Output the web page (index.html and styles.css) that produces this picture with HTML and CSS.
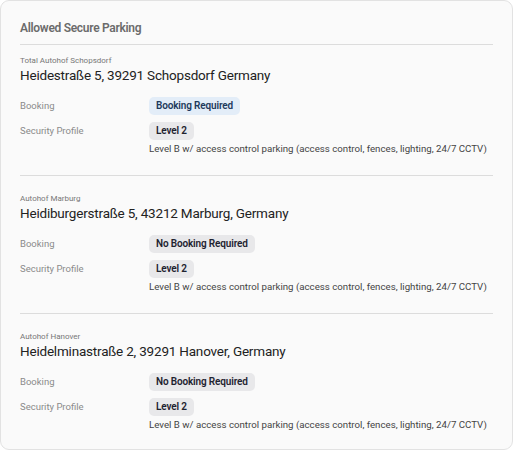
FILE: index.html
```html
<!DOCTYPE html>
<html>
<head>
<meta charset="utf-8">
<link rel="stylesheet" href="styles.css">
</head>
<body>
<div class="card">
  <h2 class="title">Allowed Secure Parking</h2>
  <section class="site">
    <div class="site-name">Total Autohof Schopsdorf</div>
    <div class="address">Heidestraße 5, 39291 Schopsdorf Germany</div>
    <div class="rows">
      <div class="label">Booking</div>
      <div class="value"><span class="pill pill-blue">Booking Required</span></div>
      <div class="label">Security Profile</div>
      <div class="value"><span class="pill">Level 2</span><div class="desc">Level B w/ access control parking (access control, fences, lighting, 24/7 CCTV)</div></div>
    </div>
  </section>
  <section class="site">
    <div class="site-name">Autohof Marburg</div>
    <div class="address">Heidiburgerstraße 5, 43212 Marburg, Germany</div>
    <div class="rows">
      <div class="label">Booking</div>
      <div class="value"><span class="pill">No Booking Required</span></div>
      <div class="label">Security Profile</div>
      <div class="value"><span class="pill">Level 2</span><div class="desc">Level B w/ access control parking (access control, fences, lighting, 24/7 CCTV)</div></div>
    </div>
  </section>
  <section class="site last">
    <div class="site-name">Autohof Hanover</div>
    <div class="address">Heidelminastraße 2, 39291 Hanover, Germany</div>
    <div class="rows">
      <div class="label">Booking</div>
      <div class="value"><span class="pill">No Booking Required</span></div>
      <div class="label">Security Profile</div>
      <div class="value"><span class="pill">Level 2</span><div class="desc">Level B w/ access control parking (access control, fences, lighting, 24/7 CCTV)</div></div>
    </div>
  </section>
</div>
</body>
</html>
```
FILE: styles.css
```css
* { box-sizing: border-box; }
html, body { margin: 0; padding: 0; background: #ffffff; }
body { font-family: Roboto, "Liberation Sans", sans-serif; width: 513px; height: 450px; }
.card {
  width: 513px;
  height: 450px;
  background: #fafafa;
  border: 1px solid #e2e2e2;
  border-radius: 9px;
  padding: 17px 19px 0 19px;
}
.title {
  margin: 0;
  font-size: 12px;
  line-height: 20px;
  font-weight: 600;
  letter-spacing: -0.3px;
  color: #6b6b6b;
  padding-bottom: 6px;
  border-bottom: 1px solid #dcdcdc;
}
.site {
  padding: 10px 0 19px 0;
  border-bottom: 1px solid #dcdcdc;
}
.site + .site { padding-top: 17px; }
.site.last { border-bottom: none; }
.site-name {
  font-size: 8px;
  line-height: 11px;
  color: #777;
}
.address {
  font-size: 13.5px;
  line-height: 18px;
  letter-spacing: -0.2px;
  color: #222;
}
.rows {
  margin-top: 13px;
  display: grid;
  grid-template-columns: 129px 1fr;
  row-gap: 7px;
}
.label {
  font-size: 9.5px;
  line-height: 18px;
  color: #8a8a8a;
}
.value {
  display: flex;
  flex-direction: column;
  align-items: flex-start;
}
.pill {
  display: block;
  font-size: 10px;
  line-height: 18px;
  font-weight: 600;
  letter-spacing: -0.15px;
  padding: 0 7px;
  border-radius: 5px;
  background: #e8e8ea;
  color: #1f2330;
}
.pill-blue {
  background: #e3edf8;
  color: #1e3a5c;
}
.desc {
  margin-top: 2px;
  font-size: 9.7px;
  line-height: 14px;
  color: #444;
  white-space: nowrap;
}
```
